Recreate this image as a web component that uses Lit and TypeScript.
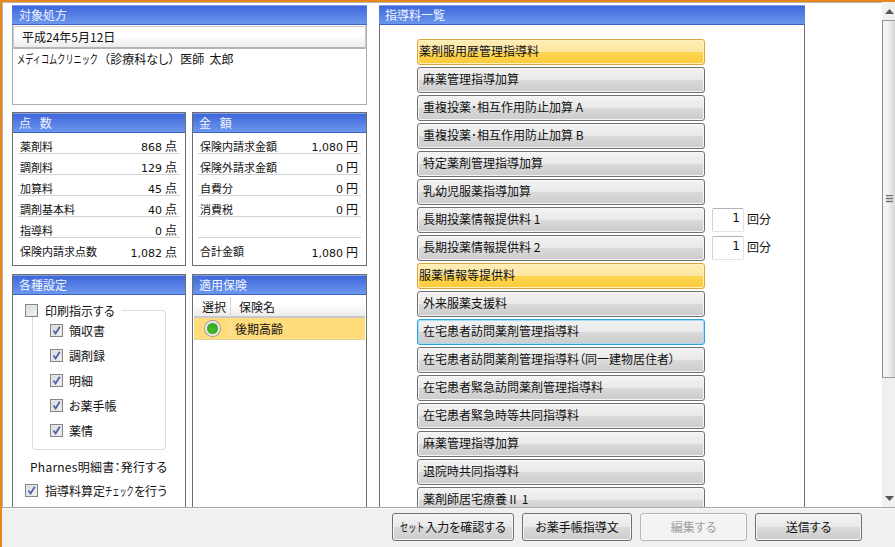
import { LitElement, html, css, svg } from "lit";
import { customElement } from "lit/decorators.js";

const points = [["薬剤料","868"],["調剤料","129"],["加算料","45"],["調剤基本料","40"],["指導料","0"],["保険内請求点数","1,082"]];
const money = [["保険内請求金額","1,080"],["保険外請求金額","0"],["自費分","0"],["消費税","0"],["",""],["合計金額","1,080"]];
const prints = ["領収書","調剤録","明細","お薬手帳","薬情"];
type Item = { t: string; k?: string; n?: boolean };
const items: Item[] = [
  { t: "薬剤服用歴管理指導料", k: "on" },
  { t: "麻薬管理指導加算" },
  { t: "重複投薬･相互作用防止加算 A" },
  { t: "重複投薬･相互作用防止加算 B" },
  { t: "特定薬剤管理指導加算" },
  { t: "乳幼児服薬指導加算" },
  { t: "長期投薬情報提供料 1", n: true },
  { t: "長期投薬情報提供料 2", n: true },
  { t: "服薬情報等提供料", k: "on" },
  { t: "外来服薬支援料" },
  { t: "在宅患者訪問薬剤管理指導料", k: "focus" },
  { t: "在宅患者訪問薬剤管理指導料（同一建物居住者）" },
  { t: "在宅患者緊急訪問薬剤管理指導料" },
  { t: "在宅患者緊急時等共同指導料" },
  { t: "麻薬管理指導加算" },
  { t: "退院時共同指導料" },
  { t: "薬剤師居宅療養Ⅱ 1" },
];

const check = svg`<svg viewBox="0 0 11 11" width="11" height="11"><path d="M2.5 5.5 L4.6 8.5 L8.8 1.8" fill="none" stroke="#4a5fa8" stroke-width="1.7"/></svg>`;

@customElement("app-root")
export class AppRoot extends LitElement {
  static styles = css`
    :host { display: block; width: 895px; height: 547px; overflow: hidden; background: #fff;
      font-family: "Noto Sans CJK JP", "Liberation Sans", sans-serif; font-size: 12px; color: #111; font-feature-settings: "palt"; }
    * { box-sizing: border-box; }
    .window { height: 547px; display: flex; flex-direction: column; border-top: 2px solid #e8871e; border-left: 2px solid #e8871e; box-shadow: inset 1px 1px 0 #b5b5b5; }
    .main { flex: 1; min-height: 0; display: flex; overflow: hidden; }
    .content { flex: 1; min-width: 0; display: flex; gap: 12px; padding: 3px 0 0 10px; overflow: hidden; }
    .left { width: 355px; flex: none; display: flex; flex-direction: column; }
    .panel { border: 1px solid #6e6e6e; background: #fff; display: flex; flex-direction: column; }
    .head { height: 20px; flex: none; color: #f2f5ff; line-height: 17px; padding-left: 6px; font-size: 12px;
      background: linear-gradient(#3f67da, #6b97ee); border-top: 1px solid #7f9fe8; border-bottom: 1px solid #3f62c4; }
    .head.wide { word-spacing: 6px; }
    .target { height: 100px; border: 1px solid #aaadb3; border-top: none; }
    .target .head { margin: 0 -1px; padding-left: 7px; }
    .date { height: 23px; flex: none; margin-top: 1px; border: 1px solid #c9c9c9; border-bottom: 2px solid #b5b5b5; padding-left: 8px; line-height: 20px;
      background: linear-gradient(#fff 45%, #ececec); font-size: 12px; }
    .doctor { padding: 1px 0 0 4px; line-height: 18px; white-space: pre; font-feature-settings: normal; }
    .squeeze { display: inline-block; transform-origin: left center; font-feature-settings: normal; }
    .doctor .squeeze { transform: scaleX(0.68); margin-right: -38px; }
    .doctor .nasi { letter-spacing: -1px; }
    .two { display: grid; grid-template-columns: 174px 175px; gap: 6px; }
    .sums { height: 154px; margin-top: 7px; }
    .rows { padding: 0 5px; display: flex; flex-direction: column; }
    .row { height: 21px; flex: none; display: flex; justify-content: space-between; align-items: center; padding: 5px 3px 0 2px; border-bottom: 1px solid #d4d4d4; font-size: 11px; }
    .row:last-child { border-bottom: none; }
    .row .v { font-family: "DejaVu Sans", sans-serif; font-size: 11px; white-space: pre; }
    .row .u { font-family: "Noto Sans CJK JP", sans-serif; font-size: 12px; margin-left: 3px; font-feature-settings: normal; }
    .lower { flex: 1; margin-top: 8px; min-height: 0; }
    .lower .panel { border-bottom: none; }
    .settings { padding: 8px 0 0 12px; position: relative; }
    .cb { width: 13px; height: 13px; flex: none; border: 1px solid #858585; background: linear-gradient(135deg, #d8d8d8, #f4f4f4); display: flex; align-items: center; justify-content: center; box-shadow: inset 0 0 0 1px #e6e6e6; }
    .line { display: flex; align-items: center; gap: 7px; height: 14px; }
    fieldset { margin: 0 0 0 7px; padding: 0 0 0 17px; width: 134px; height: 147px; border: 1px solid #d3dbe6; border-radius: 4px; }
    legend { padding: 0 7px 0 0; margin-left: -25px; background: #fff; }
    .opts { display: flex; flex-direction: column; gap: 11px; padding-top: 6px; }
    .opts .line { gap: 6px; }
    .pharnes { margin: 9px 0 0 5px; line-height: 16px; letter-spacing: 0.25px; }
    .guide { margin-top: 8px; }
    .guide .squeeze { transform: scaleX(0.6); margin-right: -19px; }
    .tbl-head { display: grid; grid-template-columns: 37px 1fr; height: 22px; margin: 1px 1px 0; padding-top: 1px; border-bottom: 2px solid #c8c8c8; background: linear-gradient(#fff 40%, #ececec); line-height: 20px; font-size: 12px; }
    .tbl-head div { padding-left: 8px; }
    .tbl-head div:first-child { border-right: 1px solid #d8d8d8; }
    .tbl-row { display: grid; grid-template-columns: 37px 1fr; height: 22px; margin: 0 1px; background: #ffdc7c; border-bottom: 1px solid #e3d3a0; line-height: 21px; }
    .tbl-row div:first-child { border-right: 1px solid #efe6c4; display: flex; align-items: center; justify-content: center; }
    .tbl-row div:last-child { padding-left: 4px; }
    .dot { width: 15px; height: 15px; border-radius: 50%; background: radial-gradient(circle at 50% 60%, #45c02c, #2f9a1a); border: 2px solid #e8e8e8; box-shadow: 0 0 0 1px #9a9a9a; }
    .right { width: 426px; flex: none; border: 1px solid #6e6e6e; border-top: none; border-bottom: none; display: flex; flex-direction: column; }
    .right .head { margin: 0 -1px; padding-left: 6px; }
    .list { padding: 14px 0 0 37px; display: flex; flex-direction: column; gap: 2px; }
    .item { display: flex; align-items: center; height: 26px; flex: none; }
    .btn { border: 1px solid #707070; border-radius: 3px; box-shadow: inset 0 0 0 1px #f6f6f6; color: #111; font: inherit;
      background: linear-gradient(#f3f3f3, #e9e9e9 49%, #dadada 50%, #cccccc); display: flex; align-items: center; }
    .item .btn { width: 288px; height: 26px; padding: 0 0 4px 5px; flex: none; white-space: pre; }
    .item .btn.on { border-color: #d9a63e; padding-left: 1px; background: linear-gradient(#feedb5, #fde5a0 49%, #fdd551 50%, #fdca3a); box-shadow: inset 0 0 0 1px #fff0c0; }
    .item .btn.focus { border-color: #2ea3dc; box-shadow: inset 0 0 0 1px #a6dcf5; }
    .count { width: 32px; height: 24px; margin-left: 7px; border: 1px solid #dfe3ea; border-top-color: #b3b3b3; border-left-color: #cfd2d8; border-radius: 2px; text-align: right; padding: 0 3px 0 0; line-height: 19px; background: #fff; font-family: "DejaVu Sans", sans-serif; }
    .unit { margin-left: 3px; padding-bottom: 4px; }
    .scroll { width: 13px; flex: none; background: #f0f0f0; display: flex; flex-direction: column; align-items: stretch; }
    .arrow { height: 18px; flex: none; display: flex; justify-content: center; align-items: center; padding-left: 1px; }
    .thumb { height: 358px; flex: none; border-left: 1px solid #8f8f8f; border-top: 1px solid #9a9a9a; border-bottom: 1px solid #9a9a9a; background: linear-gradient(90deg, #f3f3f3 40%, #d6d6d6); display: flex; align-items: center; justify-content: center; }
    .grip { width: 7px; height: 8px; background: repeating-linear-gradient(#6e6e6e 0 1px, #d0d0d0 1px 3px); }
    .track { flex: 1; }
    .bar { height: 40px; flex: none; display: flex; gap: 8px; padding: 5px 0 0 390px; background: #f0f0f0; border-top: 1px solid #a8a8a8; box-shadow: inset 0 1px 0 #f8f8f8; }
    .bar .btn { height: 28px; justify-content: center; padding: 0 0 1px; }
    .bar .squeeze { transform: scaleX(0.68); margin-right: -11px; }
    .b1 { width: 122px; } .b2 { width: 110px; } .b3 { width: 107px; } .b4 { width: 107px; }
    .bar .b3 { color: #a0a0a0; border-color: #b4b4b4; background: #f3f3f3; box-shadow: inset 0 0 0 1px #fafafa; }
  `;

  private box(on: boolean) {
    return html`<span class="cb">${on ? check : ""}</span>`;
  }

  private sumPanel(title: string, rows: string[][], unit: string) {
    return html`<section class="panel">
      <div class="head wide">${title}</div>
      <div class="rows">
        ${rows.map(([l, v]) => html`<div class="row"><span>${l}</span>${v ? html`<span class="v">${v}<span class="u">${unit}</span></span>` : ""}</div>`)}
      </div>
    </section>`;
  }

  render() {
    return html`<div class="window">
      <div class="main">
        <div class="content">
          <div class="left">
            <section class="panel target">
              <div class="head">対象処方</div>
              <div class="date">平成24年5月12日</div>
              <div class="doctor"><span class="squeeze">メディコムクリニック</span>（診療科<span class="nasi">なし</span>）医師  太郎</div>
            </section>
            <div class="two sums">
              ${this.sumPanel("点 数", points, "点")}
              ${this.sumPanel("金 額", money, "円")}
            </div>
            <div class="two lower">
              <section class="panel">
                <div class="head">各種設定</div>
                <div class="settings">
                  <fieldset>
                    <legend><span class="line">${this.box(false)}<span>印刷指示する</span></span></legend>
                    <div class="opts">
                      ${prints.map((p) => html`<div class="line">${this.box(true)}<span>${p}</span></div>`)}
                    </div>
                  </fieldset>
                  <div class="pharnes">Pharnes明細書：発行する</div>
                  <div class="line guide">${this.box(true)}<span>指導料算定<span class="squeeze">チェック</span>を行う</span></div>
                </div>
              </section>
              <section class="panel">
                <div class="head">適用保険</div>
                <div class="tbl-head"><div>選択</div><div>保険名</div></div>
                <div class="tbl-row"><div><span class="dot"></span></div><div>後期高齢</div></div>
              </section>
            </div>
          </div>
          <section class="right">
            <div class="head">指導料一覧</div>
            <div class="list">
              ${items.map((i) => html`<div class="item">
                <button class="btn ${i.k ?? ""}">${i.t}</button>
                ${i.n ? html`<span class="count">1</span><span class="unit">回分</span>` : ""}
              </div>`)}
            </div>
          </section>
        </div>
        <div class="scroll">
          <div class="arrow"><svg width="9" height="5" viewBox="0 0 9 5"><path d="M4.5 0 L9 5 H0 Z" fill="#555"/></svg></div>
          <div class="thumb"><div class="grip"></div></div>
          <div class="track"></div>
          <div class="arrow"><svg width="9" height="5" viewBox="0 0 9 5"><path d="M0 0 H9 L4.5 5 Z" fill="#555"/></svg></div>
        </div>
      </div>
      <div class="bar">
        <button class="btn b1"><span><span class="squeeze">セット</span>入力を確認する</span></button>
        <button class="btn b2">お薬手帳指導文</button>
        <button class="btn b3">編集する</button>
        <button class="btn b4">送信する</button>
      </div>
    </div>`;
  }
}
